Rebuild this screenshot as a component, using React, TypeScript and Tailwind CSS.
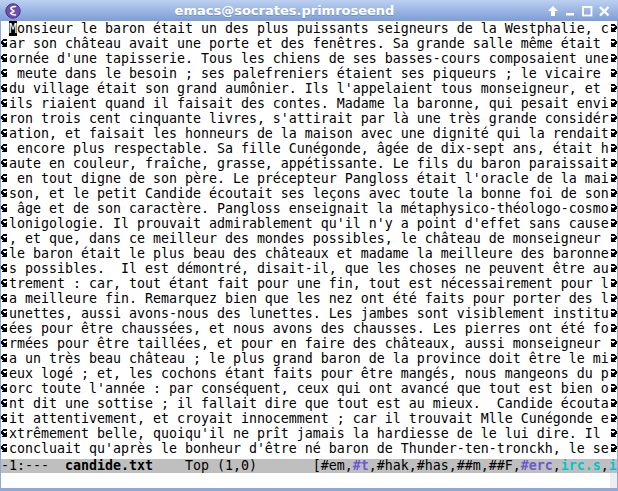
import React from "react";

const TEXT =
  "Monsieur le baron était un des plus puissants seigneurs de la Westphalie, car son château avait une porte et des fenêtres. Sa grande salle même était ornée d'une tapisserie. Tous les chiens de ses basses-cours composaient une meute dans le besoin ; ses palefreniers étaient ses piqueurs ; le vicaire du village était son grand aumônier. Ils l'appelaient tous monseigneur, et ils riaient quand il faisait des contes. Madame la baronne, qui pesait environ trois cent cinquante livres, s'attirait par là une très grande considération, et faisait les honneurs de la maison avec une dignité qui la rendait encore plus respectable. Sa fille Cunégonde, âgée de dix-sept ans, était haute en couleur, fraîche, grasse, appétissante. Le fils du baron paraissait en tout digne de son père. Le précepteur Pangloss était l'oracle de la maison, et le petit Candide écoutait ses leçons avec toute la bonne foi de son âge et de son caractère. Pangloss enseignait la métaphysico-théologo-cosmolonigologie. Il prouvait admirablement qu'il n'y a point d'effet sans cause, et que, dans ce meilleur des mondes possibles, le château de monseigneur le baron était le plus beau des châteaux et madame la meilleure des baronnes possibles.  Il est démontré, disait-il, que les choses ne peuvent être autrement : car, tout étant fait pour une fin, tout est nécessairement pour la meilleure fin. Remarquez bien que les nez ont été faits pour porter des lunettes, aussi avons-nous des lunettes. Les jambes sont visiblement instituées pour être chaussées, et nous avons des chausses. Les pierres ont été formées pour être taillées, et pour en faire des châteaux, aussi monseigneur a un très beau château ; le plus grand baron de la province doit être le mieux logé ; et, les cochons étant faits pour être mangés, nous mangeons du porc toute l'année : par conséquent, ceux qui ont avancé que tout est bien ont dit une sottise ; il fallait dire que tout est au mieux.  Candide écoutait attentivement, et croyait innocemment ; car il trouvait Mlle Cunégonde extrêmement belle, quoiqu'il ne prît jamais la hardiesse de le lui dire. Il concluait qu'après le bonheur d'être né baron de Thunder-ten-tronckh, le se";

const COLS = 75;
const rows: string[] = [];
for (let i = 0; i < TEXT.length && rows.length < 29; i += COLS) rows.push(TEXT.slice(i, i + COLS));

// emacs fringe bitmaps (8x8)
const LEFT_CURLY = [0x3c, 0x7c, 0xc0, 0xe4, 0xfc, 0x7c, 0x3c, 0x7c];
const RIGHT_CURLY = [0x3c, 0x3e, 0x03, 0x27, 0x3f, 0x3e, 0x3c, 0x3e];

function Bitmap({ bits }: { bits: number[] }) {
  const cells: React.ReactElement[] = [];
  bits.forEach((b, y) => {
    for (let x = 0; x < 8; x++) {
      if (b & (0x80 >> x)) cells.push(<rect key={`${x}-${y}`} x={x} y={y} width={1} height={1} />);
    }
  });
  return (
    <svg width="8" height="8" viewBox="0 0 8 8" shapeRendering="crispEdges" fill="#000">
      {cells}
    </svg>
  );
}

function EmacsIcon() {
  return (
    <svg width="16" height="16" viewBox="0 0 16 16">
      <circle cx="8" cy="8" r="7.2" fill="#6e4fae" stroke="#4a2f86" strokeWidth="1" />
      <path
        d="M10.5 3.5 C7 3.5 4.5 5 6.8 6.5 C9 7.8 10.5 8.5 6.5 9.5 C5 10 5.5 11.5 10.5 12"
        fill="none"
        stroke="#fff"
        strokeWidth="1.6"
        strokeLinecap="round"
      />
    </svg>
  );
}

function TitleButtons() {
  return (
    <div className="flex items-center gap-[5px] pr-[8px]">
      <svg width="12" height="12" viewBox="0 0 12 12" fill="#fff">
        <path d="M6 1 L11 6 L8 6 L8 11 L4 11 L4 6 L1 6 Z" />
      </svg>
      <svg width="12" height="12" viewBox="0 0 12 12" fill="#fff">
        <rect x="2" y="8" width="8" height="2.5" />
      </svg>
      <svg width="12" height="12" viewBox="0 0 12 12" fill="none" stroke="#fff" strokeWidth="1.8">
        <rect x="2" y="2" width="8.5" height="8.5" />
      </svg>
      <svg width="12" height="12" viewBox="0 0 12 12" fill="none" stroke="#fff" strokeWidth="2.4">
        <path d="M2 2 L10.5 10.5 M10.5 2 L2 10.5" />
      </svg>
    </div>
  );
}

export default function App() {
  return (
    <div className="w-[618px] h-[491px] flex flex-col bg-white overflow-hidden">
      {/* title bar */}
      <div className="h-[21px] flex items-center bg-linear-to-b from-[#bcd0f0] to-[#7d9dd6]">
        <div className="pl-[5px] w-[22px] flex items-center">
          <EmacsIcon />
        </div>
        <div className="flex-1 text-center text-white font-bold text-[13px] leading-[21px] font-['DejaVu_Sans',sans-serif] [text-shadow:0_1px_0_rgba(60,90,150,0.35)]">
          emacs@socrates.primroseend
        </div>
        <TitleButtons />
      </div>

      <div className="flex-1 flex flex-col border-x border-b-[3px] border-[#8ea9d9]">
        {/* buffer */}
        <div className="flex flex-col font-['DejaVu_Sans_Mono',monospace] text-[13.29px] leading-[15px] text-black">
          {rows.map((r, i) => (
            <div key={i} className="flex h-[15px]">
              <div className="w-[8px] pt-[3px]">{i > 0 && <Bitmap bits={LEFT_CURLY} />}</div>
              <div className="w-[600px] whitespace-pre overflow-hidden">
                {i === 0 ? (
                  <>
                    <span className="bg-black text-white">{r[0]}</span>
                    {r.slice(1)}
                  </>
                ) : (
                  r
                )}
              </div>
              <div className="w-[8px] pt-[3px]">
                <Bitmap bits={RIGHT_CURLY} />
              </div>
            </div>
          ))}
        </div>

        {/* mode line */}
        <div className="mt-[3px] h-[14px] bg-[#bfbfbf] whitespace-pre overflow-hidden font-['DejaVu_Sans_Mono',monospace] text-[13.29px] leading-[14px] text-black">
          {"-1:---  "}
          <b>candide.txt</b>
          {"    Top (1,0)       [#em,"}
          <b className="text-[#6a5acd]">#t</b>
          {",#hak,#has,##m,##F,"}
          <b className="text-[#6a5acd]">#erc</b>
          {","}
          <b className="text-[#00c5cd]">irc.s</b>
          {","}
          <b className="text-[#00c5cd]">i</b>
        </div>

        {/* minibuffer */}
        <div className="flex-1 flex">
          <div className="flex-1" />
          <div className="w-[7px] bg-[#eeeeee]" />
        </div>
      </div>
    </div>
  );
}
